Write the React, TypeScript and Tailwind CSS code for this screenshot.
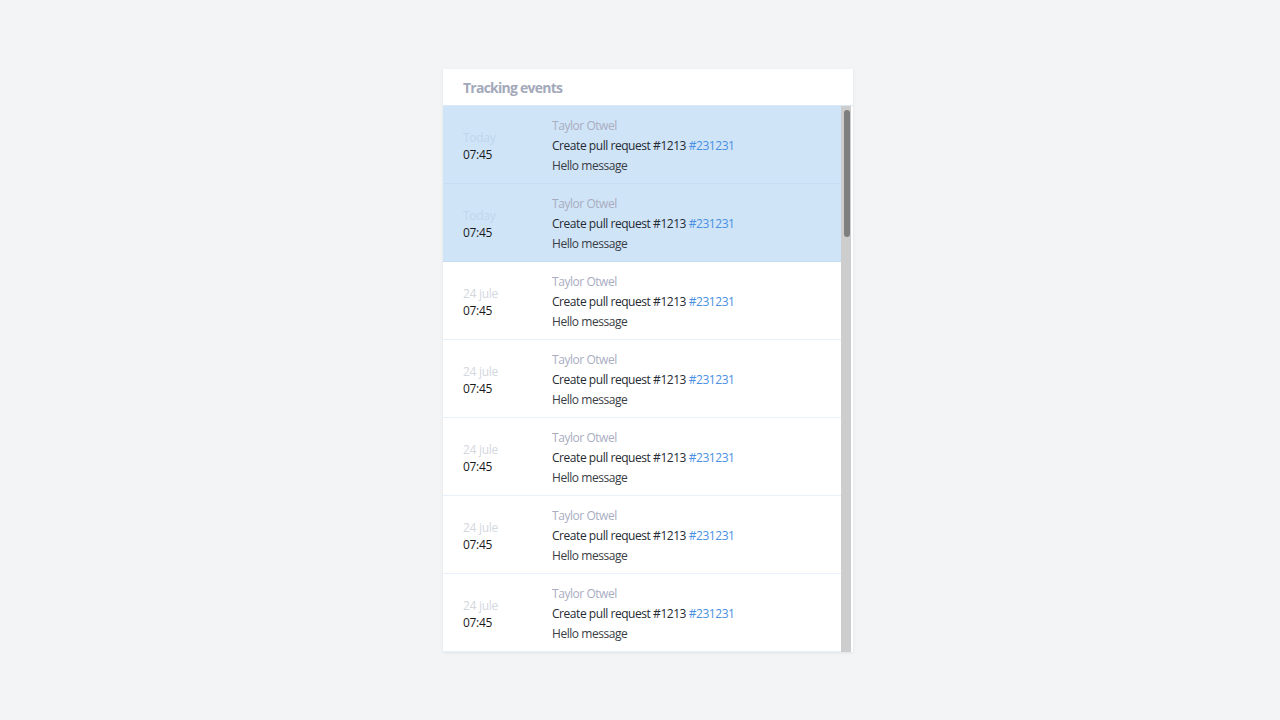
import React from "react";

type Row = { date: string; selected: boolean };

const rows: Row[] = Array.from({ length: 7 }, (_, i) => ({
  date: i < 2 ? "Today" : "24 jule",
  selected: i < 2,
}));

export default function App() {
  return (
    <div
      className="min-h-screen w-full bg-[#f3f4f6] flex justify-center items-start pt-[69px]"
      style={{ fontFamily: '"Open Sans", "Noto Sans", sans-serif' }}
    >
      <div className="ml-[16px] w-[410px] bg-white shadow-[0_1px_3px_rgba(0,0,0,0.08)] flex flex-col">
        <div className="h-[37px] flex items-center px-5 border-b border-[#dbe9f7]">
          <span className="text-[14px] font-bold text-[#a3a9ba] tracking-[-0.75px] mt-[1px]">
            Tracking events
          </span>
        </div>
        <div className="h-[546px] flex">
          <div className="flex-1 overflow-hidden">
            {rows.map((r, i) => (
              <div
                key={i}
                className={
                  "h-[78px] flex items-center border-b " +
                  (r.selected
                    ? "bg-[#cfe4f7] border-[#c6ddf3]"
                    : "bg-white border-[#e6f1fc]")
                }
              >
                <div className="w-[109px] shrink-0 pl-5 flex flex-col leading-[17px] text-[12px] tracking-[-0.3px] mt-[2px]">
                  <span className={r.selected ? "text-[#bfd6ec]" : "text-[#d3d7de]"}>
                    {r.date}
                  </span>
                  <span className="text-[#1a1a1a]">07:45</span>
                </div>
                <div className="flex flex-col text-[12px] leading-[20px] tracking-[-0.45px] mt-[2px]">
                  <span className="text-[#a9adbf]">Taylor Otwel</span>
                  <span className="text-[#262a33]">
                    Create pull request #1213{" "}
                    <span className="text-[#4a90e2]">#231231</span>
                  </span>
                  <span className="text-[#3a3d45]">Hello message</span>
                </div>
              </div>
            ))}
          </div>
          <div className="w-[12px] pr-[2px] flex">
            <div className="flex-1 bg-[#cdcdcd] pl-[3px] pt-[4px]">
              <div className="w-[6px] h-[127px] rounded-full bg-[#7f7f7f]" />
            </div>
          </div>
        </div>
      </div>
    </div>
  );
}
